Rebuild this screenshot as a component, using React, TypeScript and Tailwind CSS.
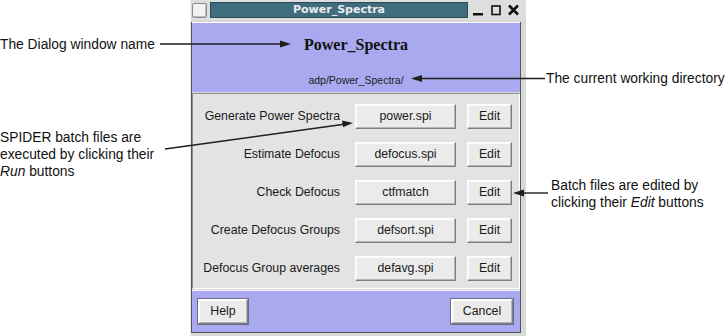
import { FC } from "react";

const sans = { fontFamily: '"Liberation Sans", Arial, sans-serif' };

const rows = [
    { label: "Generate Power Spectra", file: "power.spi" },
    { label: "Estimate Defocus", file: "defocus.spi" },
    { label: "Check Defocus", file: "ctfmatch" },
    { label: "Create Defocus Groups", file: "defsort.spi" },
    { label: "Defocus Group averages", file: "defavg.spi" },
];

const TkButton: FC<{ label: string; className: string }> = ({ label, className }) => (
    <button
        type="button"
        className={
            "h-[25px] bg-[#ebebeb] text-[12.3px] text-[#1a1a1a] border border-t-white border-l-white border-r-[#7d7d7d] border-b-[#7d7d7d] shadow-[inset_-1px_-1px_0_#b5b5b5,inset_1px_1px_0_#fafafa] flex items-center justify-center " +
            className
        }>
        {label}
    </button>
);

const Arrows: FC = () => (
    <svg className="absolute inset-0 pointer-events-none" width="728" height="336" viewBox="0 0 728 336">
        <g stroke="#1e1e1e" strokeWidth="1.4" fill="#1e1e1e">
            {/* dialog window name */}
            <line x1="160" y1="44" x2="282" y2="44" />
            <polygon points="291,44 280,40.5 280,47.5" stroke="none" />
            {/* working directory */}
            <line x1="420" y1="78.5" x2="545" y2="78.5" />
            <polygon points="411,78.5 422,75 422,82" stroke="none" />
            {/* run buttons */}
            <line x1="165" y1="149" x2="344" y2="124.3" />
            <polygon points="353,123 342,120.4 343,127.3" stroke="none" />
            {/* edit buttons */}
            <line x1="522" y1="193" x2="548" y2="193" />
            <polygon points="513,193 524,189.5 524,196.5" stroke="none" />
        </g>
    </svg>
);

const App: FC = () => {
    return (
        <div className="relative w-[728px] h-[336px] bg-white flex overflow-hidden" style={sans}>
            {/* left notes */}
            <div className="w-[190px] flex flex-col text-[13.8px] leading-[17px] text-[#111] pt-[36px]">
                <div>The Dialog window name</div>
                <div className="mt-[76px]">
                    SPIDER batch files are
                    <br />
                    executed by clicking their
                    <br />
                    <i>Run</i> buttons
                </div>
            </div>

            {/* dialog window */}
            <div className="w-[336px] h-[336px] flex flex-col bg-[#d8d8d8] border-l border-[#eeeeee]">
                {/* title bar */}
                <div className="h-[20px] flex items-center bg-[#dedede] pl-[1px]">
                    <div className="w-[15px] h-[15px] bg-[#f2f2f2] border border-[#8a8a8a] rounded-[2px] shadow-[inset_-1px_-1px_0_#bdbdbd]" />
                    <div
                        className="ml-[3px] w-[258px] h-[16px] bg-[#3f6d7d] border border-[#2a4a56] flex items-center justify-center text-[#ececec] text-[11px] font-bold"
                        style={{ fontFamily: '"DejaVu Sans", Verdana, sans-serif' }}>
                        Power_Spectra
                    </div>
                    <div className="flex items-center ml-[5px] gap-[7px]">
                        <svg width="11" height="12" viewBox="0 0 11 12">
                            <rect x="0" y="9" width="10" height="2.5" fill="#111" />
                        </svg>
                        <svg width="10" height="12" viewBox="0 0 10 12">
                            <rect x="1" y="2" width="8" height="8.5" fill="none" stroke="#111" strokeWidth="1.6" />
                        </svg>
                        <svg width="11" height="12" viewBox="0 0 11 12">
                            <path d="M1 1.5 L10 10.5 M10 1.5 L1 10.5" stroke="#111" strokeWidth="2.6" />
                        </svg>
                    </div>
                </div>

                <div className="flex-1 flex flex-col mt-[2px] border-l border-r border-b border-[#555] mr-[5px]">
                    {/* header */}
                    <div className="h-[70px] bg-[#a9a9ef] flex flex-col items-center pt-[12px] border-t border-white">
                        <div
                            className="text-[16px] leading-[20px] font-bold text-[#111]"
                            style={{ fontFamily: '"Liberation Serif", "Times New Roman", serif' }}>
                            Power_Spectra
                        </div>
                        <div className="mt-[19px] text-[10.5px] leading-[12px] text-[#222]">adp/Power_Spectra/</div>
                    </div>

                    {/* body */}
                    <div className="mt-[1px] h-[196px] bg-[#e3e3e3] border-t border-l border-[#8e8e8e] border-b border-r border-b-white border-r-white flex flex-col gap-[13px] pt-[10px]">
                        {rows.map((r) => (
                            <div key={r.label} className="flex items-center">
                                <div className="w-[147px] text-right text-[12.3px] text-[#1a1a1a]">{r.label}</div>
                                <TkButton label={r.file} className="ml-[15px] w-[101px]" />
                                <TkButton label="Edit" className="ml-[11px] w-[45px]" />
                            </div>
                        ))}
                    </div>

                    {/* footer */}
                    <div className="mt-[1px] flex-1 bg-[#a9a9ef] border-t border-[#f4f4ff] flex items-start justify-between pt-[7px] pl-[5px] pr-[6px]">
                        <div className="border border-[#6a6a8a]">
                            <TkButton label="Help" className="w-[50px] h-[23px]" />
                        </div>
                        <div className="border border-[#6a6a8a]">
                            <TkButton label="Cancel" className="w-[62px] h-[23px]" />
                        </div>
                    </div>
                </div>
                <div className="h-[3px]" />
            </div>

            {/* right notes */}
            <div className="flex-1 flex flex-col text-[13.8px] leading-[17px] text-[#111] pl-[20px] pt-[70px]">
                <div className="whitespace-nowrap">The current working directory</div>
                <div className="mt-[90px] pl-[5px] whitespace-nowrap">
                    Batch files are edited by
                    <br />
                    clicking their <i>Edit</i> buttons
                </div>
            </div>

            <Arrows />
        </div>
    );
};

export default App;
